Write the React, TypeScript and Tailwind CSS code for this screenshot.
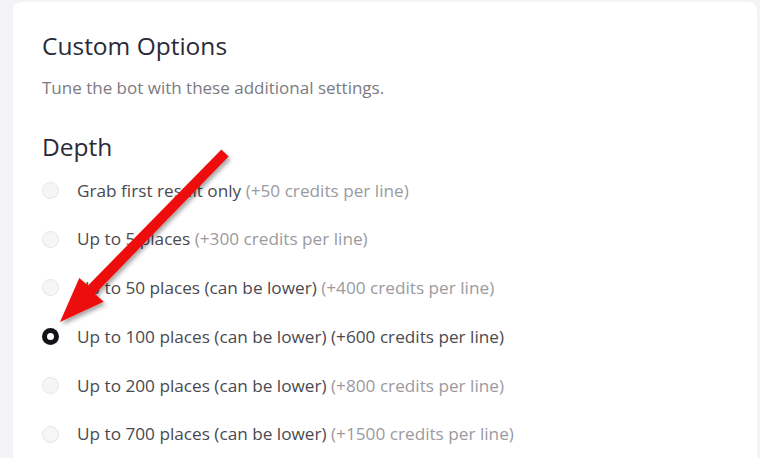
import React from "react";

const options = [
    { label: "Grab first result only", extra: "(+50 credits per line)" },
    { label: "Up to 5 places", extra: "(+300 credits per line)" },
    { label: "Up to 50 places (can be lower)", extra: "(+400 credits per line)" },
    { label: "Up to 100 places (can be lower)", extra: "(+600 credits per line)", checked: true },
    { label: "Up to 200 places (can be lower)", extra: "(+800 credits per line)" },
    { label: "Up to 700 places (can be lower)", extra: "(+1500 credits per line)" },
];

function Radio({ checked }: { checked?: boolean }) {
    if (checked) {
        return (
            <span className="w-[17px] h-[17px] rounded-full bg-[#141418] flex items-center justify-center shrink-0">
                <span className="w-[7px] h-[7px] rounded-full bg-white" />
            </span>
        );
    }
    return (
        <span className="w-[17px] h-[17px] rounded-full bg-[#f6f6f7] border border-[#e6e6e9] shrink-0" />
    );
}

function Arrow() {
    // tip (60,322), tail (225,153)
    return (
        <svg
            className="absolute left-0 top-0 pointer-events-none"
            width={760}
            height={458}
            viewBox="0 0 760 458"
        >
            <defs>
                <filter id="shadow" x="-20%" y="-20%" width="140%" height="140%">
                    <feDropShadow dx="2" dy="3" stdDeviation="2" floodColor="#000" floodOpacity="0.35" />
                </filter>
            </defs>
            <polygon
                filter="url(#shadow)"
                fill="#ee1111"
                points="228.6,156.5 221.4,149.5 88,285.5 79.3,277.9 60,322 103.7,301.7 95,294"
            />
        </svg>
    );
}

export default function App() {
    return (
        <div
            className="relative w-[760px] h-[458px] overflow-hidden bg-[#f3f3f7] pl-[13px] pr-[3px] pt-[2px]"
            style={{ fontFamily: "'Open Sans', 'Noto Sans', sans-serif" }}
        >
            <div className="bg-white rounded-t-lg h-[600px] pl-[29px] pt-[28px]">
                <h1 className="text-[24.5px] leading-8 text-[#2b2a3a]">Custom Options</h1>
                <p className="mt-[14px] text-[17px] leading-6 text-[#7b7b82]">
                    Tune the bot with these additional settings.
                </p>
                <h2 className="mt-[31px] text-[24.5px] leading-8 text-[#2b2a3a]">Depth</h2>
                <div className="mt-[3px] flex flex-col">
                    {options.map((o) => (
                        <label key={o.label} className="flex items-center h-[48.8px] gap-[18px]">
                            <Radio checked={o.checked} />
                            <span className="text-[17.2px] text-[#4a4a4f]">
                                {o.label}{" "}
                                <span className={o.checked ? "text-[#4a4a4f]" : "text-[#9a9a9f]"}>
                                    {o.extra}
                                </span>
                            </span>
                        </label>
                    ))}
                </div>
            </div>
            <Arrow />
        </div>
    );
}
